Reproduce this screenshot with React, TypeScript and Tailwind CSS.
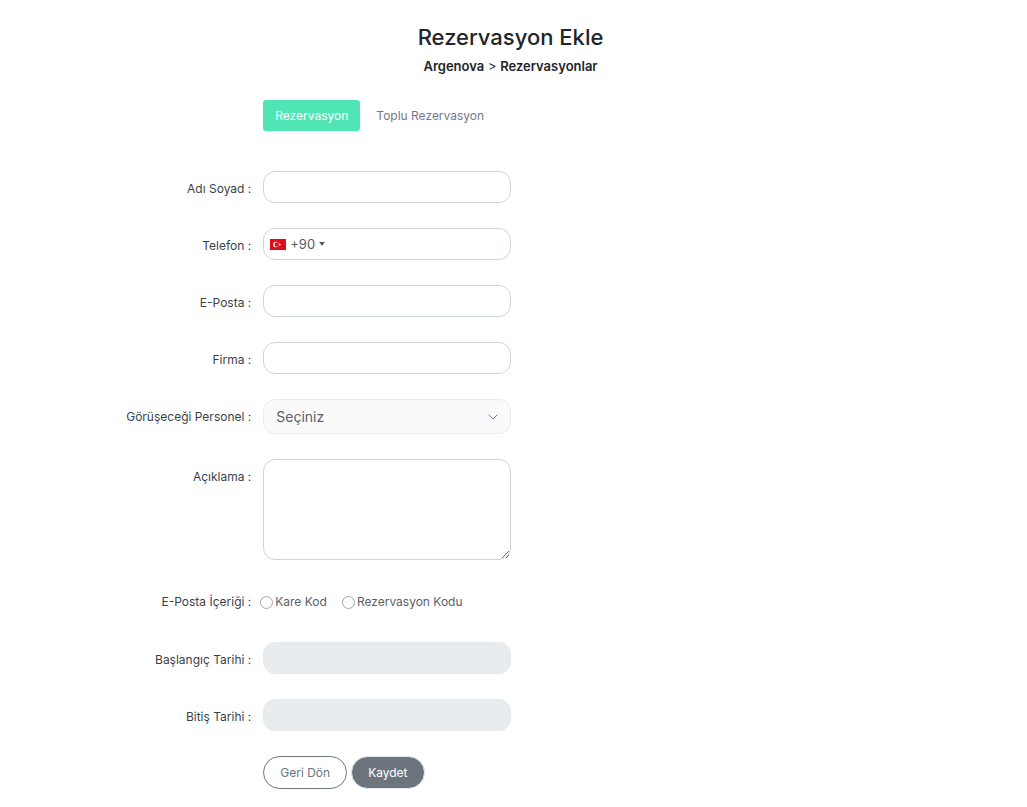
import React, { useState } from 'react';
import { ChevronDown } from 'lucide-react';

interface FormRowProps {
  label: string;
  htmlFor: string;
  children: React.ReactNode;
}

const inputClass =
  'block w-full h-8 px-3 text-xs text-[#3b3f4a] bg-white border border-[#ced4da] rounded-xl outline-none focus:border-[#50e5b4]';

const FormRow: React.FC<FormRowProps> = ({ label, htmlFor, children }) => (
  <div className="flex">
    <label
      htmlFor={htmlFor}
      className="w-1/4 shrink-0 pt-2 pr-1 text-right text-xs leading-5 text-[#3b3f4a]"
    >
      {label} :
    </label>
    <div className="w-1/4 pl-2">{children}</div>
  </div>
);

const TurkishFlag = () => (
  <svg viewBox="0 0 16 11" className="w-4 h-[11px]" aria-hidden="true">
    <rect width="16" height="11" fill="#e30a17" />
    <circle cx="6" cy="5.5" r="2.8" fill="#fff" />
    <circle cx="6.8" cy="5.5" r="2.2" fill="#e30a17" />
    <path d="M8.3 5.5l1-.35.05-1.05.65.85 1-.3-.6.85.6.85-1-.3-.65.85-.05-1.05z" fill="#fff" />
  </svg>
);

const App: React.FC = () => {
  const [tab, setTab] = useState<'single' | 'bulk'>('single');
  const [content, setContent] = useState('');
  const [form, setForm] = useState({
    name: '',
    phone: '',
    email: '',
    company: '',
    staff: '',
    description: '',
  });

  const handleChange = (
    e: React.ChangeEvent<HTMLInputElement | HTMLSelectElement | HTMLTextAreaElement>
  ) => {
    const { name, value } = e.target;
    setForm(prev => ({ ...prev, [name]: value }));
  };

  const handleSubmit = (e: React.FormEvent) => {
    e.preventDefault();
  };

  const tabClass = (active: boolean) =>
    active
      ? 'px-3 py-[5px] text-xs leading-[21px] rounded-[3px] bg-[#50e5b4] text-white cursor-pointer'
      : 'px-3 py-[5px] text-xs leading-[21px] rounded-[3px] text-[#74788d] cursor-pointer';

  return (
    <div className="min-h-screen bg-white pr-1.5 pb-4 font-['Inter',sans-serif] text-[#212529]">
      {/* Header */}
      <header className="pt-[22px] text-center">
        <h1 className="text-[22px] leading-[30px] font-medium">Rezervasyon Ekle</h1>
        <nav className="mt-1 text-[13px] leading-5">
          <a href="#argenova" className="font-semibold">Argenova</a>
          {' > '}
          <a href="#rezervasyonlar" className="font-semibold">Rezervasyonlar</a>
        </nav>
      </header>

      {/* Tabs */}
      <div className="mt-6 ml-[25%] pl-2 flex gap-1">
        <button type="button" onClick={() => setTab('single')} className={tabClass(tab === 'single')}>
          Rezervasyon
        </button>
        <button type="button" onClick={() => setTab('bulk')} className={tabClass(tab === 'bulk')}>
          Toplu Rezervasyon
        </button>
      </div>

      <form onSubmit={handleSubmit} className="mt-10 flex flex-col gap-[25px]">
        <FormRow label="Adı Soyad" htmlFor="name">
          <input id="name" name="name" type="text" value={form.name} onChange={handleChange} className={inputClass} />
        </FormRow>

        <FormRow label="Telefon" htmlFor="phone">
          <div className="flex items-center h-8 pl-1.5 bg-white border border-[#ced4da] rounded-xl overflow-hidden">
            <button
              type="button"
              aria-label="Ülke kodu"
              className="flex items-center shrink-0 text-[13px] leading-5 text-[#555a64] cursor-pointer"
            >
              <TurkishFlag />
              <span className="ml-1">+90</span>
              <svg viewBox="0 0 6 4" className="ml-1 w-1.5 h-1" aria-hidden="true">
                <path d="M.2 0h5.6L3 4z" fill="#555" />
              </svg>
            </button>
            <input
              id="phone"
              name="phone"
              type="tel"
              value={form.phone}
              onChange={handleChange}
              className="flex-1 min-w-0 h-full px-2 text-xs text-[#3b3f4a] outline-none"
            />
          </div>
        </FormRow>

        <FormRow label="E-Posta" htmlFor="email">
          <input id="email" name="email" type="email" value={form.email} onChange={handleChange} className={inputClass} />
        </FormRow>

        <FormRow label="Firma" htmlFor="company">
          <input id="company" name="company" type="text" value={form.company} onChange={handleChange} className={inputClass} />
        </FormRow>

        <FormRow label="Görüşeceği Personel" htmlFor="staff">
          <div className="relative">
            <select
              id="staff"
              name="staff"
              value={form.staff}
              onChange={handleChange}
              className="block w-full h-[35px] pl-3 pr-8 appearance-none text-sm text-[#5b5f68] bg-[#fafafa] border border-[#e9ebef] rounded-xl outline-none"
            >
              <option value="">Seçiniz</option>
            </select>
            <ChevronDown
              strokeWidth={1.5}
              className="absolute right-2.5 top-2.5 w-4 h-4 text-[#74788d] pointer-events-none"
            />
          </div>
        </FormRow>

        <FormRow label="Açıklama" htmlFor="description">
          <textarea
            id="description"
            name="description"
            value={form.description}
            onChange={handleChange}
            className="block w-full h-[101px] px-3 py-1.5 text-xs text-[#3b3f4a] bg-white border border-[#ced4da] rounded-xl outline-none"
          />
        </FormRow>

        {/* E-mail content */}
        <div role="radiogroup" aria-labelledby="content-label" className="flex items-start h-8 pt-[7px]">
          <span
            id="content-label"
            className="w-1/4 shrink-0 pr-1 text-right text-xs leading-5 text-[#3b3f4a]"
          >
            E-Posta İçeriği :
          </span>
          <div className="flex gap-[15px] pl-[5px] text-xs leading-5 text-[#5b5f68]">
            <label className="flex items-center gap-0.5">
              <input
                type="radio"
                name="content"
                value="qr"
                checked={content === 'qr'}
                onChange={e => setContent(e.target.value)}
                className="w-[13px] h-[13px] appearance-none rounded-full border border-[#a5a5a5] bg-white checked:border-4 checked:border-[#0075ff]"
              />
              Kare Kod
            </label>
            <label className="flex items-center gap-0.5">
              <input
                type="radio"
                name="content"
                value="code"
                checked={content === 'code'}
                onChange={e => setContent(e.target.value)}
                className="w-[13px] h-[13px] appearance-none rounded-full border border-[#a5a5a5] bg-white checked:border-4 checked:border-[#0075ff]"
              />
              Rezervasyon Kodu
            </label>
          </div>
        </div>

        <FormRow label="Başlangıç Tarihi" htmlFor="startDate">
          <input
            id="startDate"
            type="text"
            readOnly
            className="block w-full h-8 px-3 text-xs bg-[#e9ecef] border border-[#e6eaee] rounded-xl outline-none"
          />
        </FormRow>

        <FormRow label="Bitiş Tarihi" htmlFor="endDate">
          <input
            id="endDate"
            type="text"
            readOnly
            className="block w-full h-8 px-3 text-xs bg-[#e9ecef] border border-[#e6eaee] rounded-xl outline-none"
          />
        </FormRow>

        {/* Actions */}
        <div className="ml-[25%] pl-2 flex gap-1">
          <button
            type="button"
            className="h-[33px] px-4 text-xs text-[#6c757d] bg-white border border-[#6c757d] rounded-full cursor-pointer"
          >
            Geri Dön
          </button>
          <button
            type="submit"
            className="h-[33px] px-4 text-xs text-white bg-[#6c757d] border border-[#e9ecef] rounded-full cursor-pointer"
          >
            Kaydet
          </button>
        </div>
      </form>
    </div>
  );
};

export default App;
